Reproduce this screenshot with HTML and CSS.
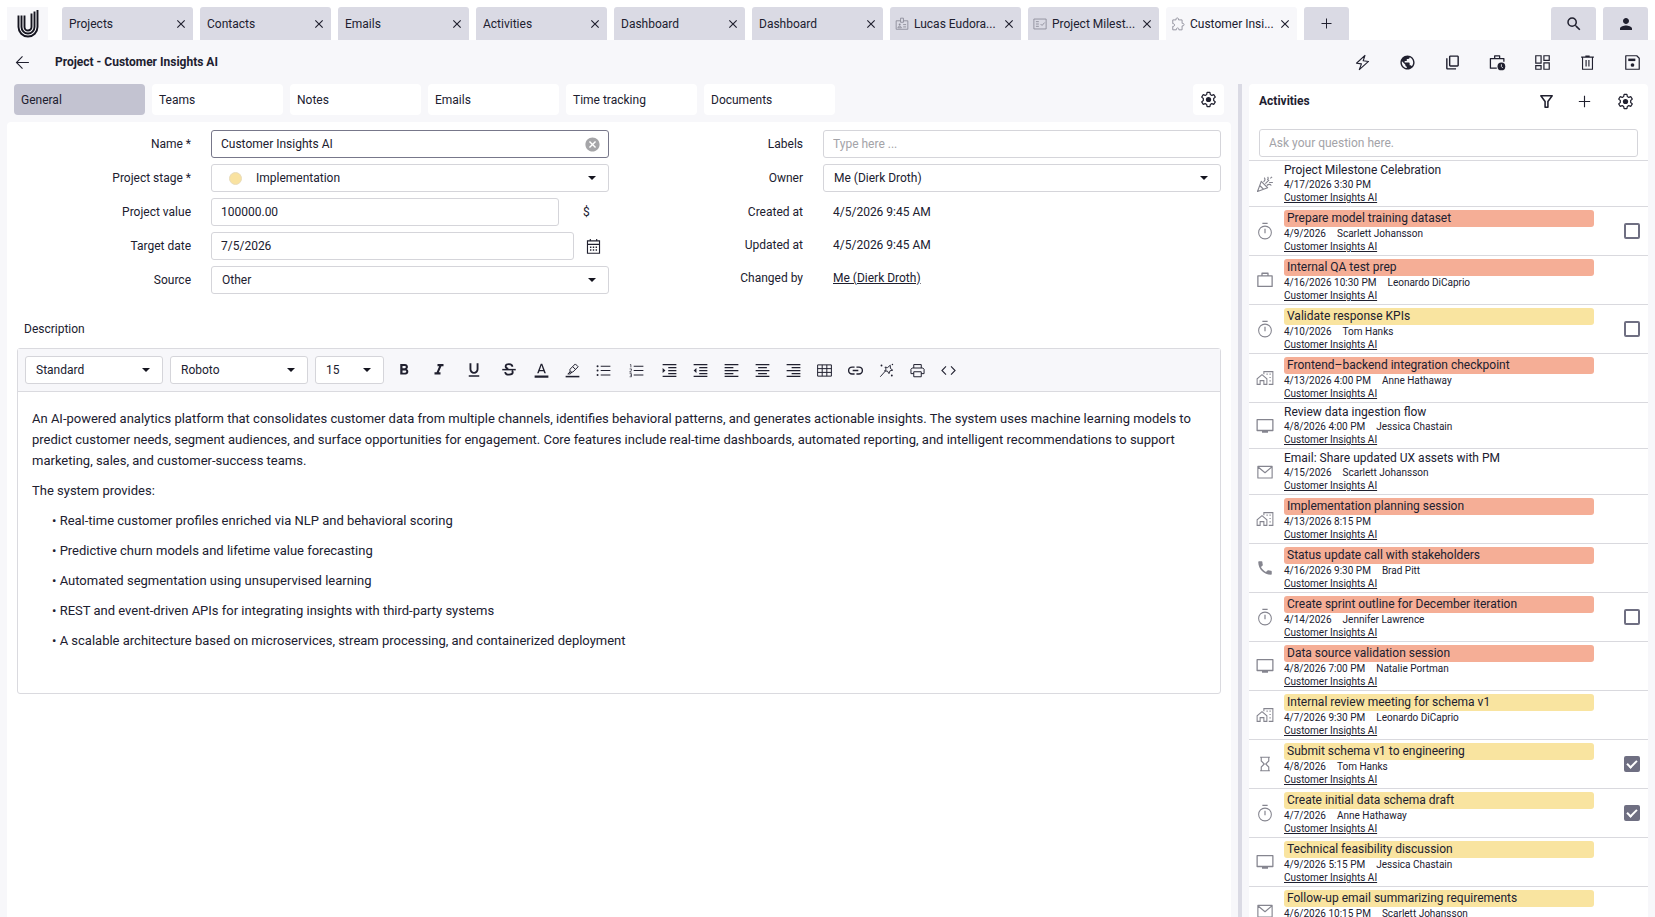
FILE: index.html
```html
<!DOCTYPE html>
<html lang="en">
<head>
    <meta charset="UTF-8" />
    <meta name="viewport" content="width=device-width, initial-scale=1.0" />
    <title>Project - Customer Insights AI</title>
    <link rel="stylesheet" href="styles.css">
</head>
<body>
    <!-- Icon sprite -->
    <svg class="sprite" aria-hidden="true">
        <symbol id="i-close" viewBox="0 0 24 24"><path d="M19 6.41 17.59 5 12 10.59 6.41 5 5 6.41 10.59 12 5 17.59 6.41 19 12 13.41 17.59 19 19 17.59 13.41 12z"/></symbol>
        <symbol id="i-plus" viewBox="0 0 24 24"><path d="M20 12.8h-7.2V20h-1.6v-7.2H4v-1.6h7.2V4h1.6v7.2H20z"/></symbol>
        <symbol id="i-search" viewBox="0 0 24 24"><path d="M15.5 14h-.79l-.28-.27A6.47 6.47 0 0 0 16 9.5 6.5 6.5 0 1 0 9.5 16c1.61 0 3.09-.59 4.23-1.57l.27.28v.79l5 4.99L20.49 19zm-6 0C7.01 14 5 11.99 5 9.5S7.01 5 9.5 5 14 7.01 14 9.5 11.99 14 9.5 14"/></symbol>
        <symbol id="i-person" viewBox="0 0 24 24"><path d="M12 12c2.21 0 4-1.79 4-4s-1.79-4-4-4-4 1.79-4 4 1.79 4 4 4m0 2c-2.67 0-8 1.34-8 4v2h16v-2c0-2.66-5.33-4-8-4"/></symbol>
        <symbol id="i-back" viewBox="0 0 24 24"><path fill="none" stroke="currentColor" stroke-width="1.5" d="M21 12H4M12 3.500 3.500 12l8.500 8.500"/></symbol>
        <symbol id="i-badge" viewBox="0 0 24 24"><path fill="none" stroke="currentColor" stroke-width="1.5" d="M9.500 6.500H2V21h20V6.500h-7.500M9.500 2h5v7h-5zM14 13h5M14 17h5M5 18.500c0-3.500 6-3.500 6 0z"/><circle cx="8" cy="13" r="1.700"/></symbol>
        <symbol id="i-fact" viewBox="0 0 24 24"><path fill="none" stroke="currentColor" stroke-width="1.500" d="M1.500 3.500h21v17h-21zM5 8h5M5 12h5M5 16h5M13 12l2.500 2.500 4.500-5"/></symbol>
        <symbol id="i-puzzle" viewBox="0 0 24 24"><path fill="none" stroke="currentColor" stroke-width="1.500" stroke-linejoin="round" d="M3 5h5.700c-1.500-4.500 5.600-4.500 4.200 0H19v6c4.500-1.200 4.500 5.200 0 4.200V22h-5.600c1-4.300-5.200-4.300-4.200 0H3v-6c4.300 1 4.300-5.500 0-4.500z"/></symbol>
        <symbol id="i-bolt" viewBox="0 0 24 24"><path fill="none" stroke="currentColor" stroke-width="1.600" stroke-linejoin="round" d="M15.500 2 3.500 13l7 1L7.500 22l13-11.500-7.500-1z"/></symbol>
        <symbol id="i-globe" viewBox="0 0 24 24"><path d="M12 2C6.480 2 2 6.480 2 12s4.480 10 10 10 10-4.480 10-10S17.520 2 12 2m-1 17.930c-3.950-.49-7-3.850-7-7.930 0-.62.080-1.210.210-1.790L9 15v1c0 1.100.9 2 2 2zm6.900-2.540c-.26-.81-1-1.390-1.900-1.390h-1v-3c0-.55-.45-1-1-1H8v-2h2c.55 0 1-.45 1-1V7h2c1.100 0 2-.9 2-2v-.41c2.930 1.190 5 4.060 5 7.410 0 2.080-.8 3.970-2.100 5.390"/></symbol>
        <symbol id="i-copy" viewBox="0 0 24 24"><path d="M19 2H9c-1.100 0-2 .9-2 2v12c0 1.100.9 2 2 2h10c1.100 0 2-.9 2-2V4c0-1.100-.9-2-2-2m0 14H9V4h10zM3 6v14c0 1.100.9 2 2 2h12v-2H5V6z"/></symbol>
        <symbol id="i-casetime" viewBox="0 0 24 24"><path fill="none" stroke="currentColor" stroke-width="1.800" stroke-linejoin="round" d="M11 20H2V6.500h19V11M8 6.500v-4h7v4"/><circle cx="17.500" cy="17.500" r="5.500"/><path stroke="#f7f7fa" stroke-width="1.200" fill="none" d="M17.500 14.500v3.200l2 2"/></symbol>
        <symbol id="i-dash" viewBox="0 0 24 24"><path fill="none" stroke="currentColor" stroke-width="1.700" d="M2.500 2.500H10V13H2.500zM14 2.500h7.500V9H14zM14 12.500h7.500v9H14zM2.500 16.500H10v5H2.500z"/></symbol>
        <symbol id="i-trash" viewBox="0 0 24 24"><path fill="none" stroke="currentColor" stroke-width="1.600" d="M5 5v16.500h14V5M3 4.500h18M9 3h6M10 8.500v9M14 8.500v9"/></symbol>
        <symbol id="i-save" viewBox="0 0 24 24"><path fill="none" stroke="currentColor" stroke-width="1.700" stroke-linejoin="round" d="M2.500 2.500H18L21.500 6v15.500h-19z"/><path d="M6 6.500h10V10H6z"/><circle cx="12" cy="15.500" r="2.600"/></symbol>
        <symbol id="i-gear" viewBox="0 0 24 24"><path fill="none" stroke="currentColor" stroke-width="1.700" stroke-linejoin="round" d="M10 2h4l.6 3 2 1.200 3-1 2 3.500-2.300 2v2.600l2.300 2-2 3.500-3-1-2 1.200-.6 3h-4l-.6-3-2-1.200-3 1-2-3.500 2.300-2v-2.600l-2.300-2 2-3.500 3 1 2-1.200z"/><circle cx="12" cy="12" r="3.700"/></symbol>
        <symbol id="i-filter" viewBox="0 0 24 24"><path fill="none" stroke="currentColor" stroke-width="2.200" stroke-linejoin="round" d="M4 4h16l-6 8v8h-4v-8z"/></symbol>
        <symbol id="i-clear" viewBox="0 0 24 24"><path d="M12 2C6.470 2 2 6.470 2 12s4.470 10 10 10 10-4.470 10-10S17.530 2 12 2m5 13.590L15.590 17 12 13.410 8.410 17 7 15.590 10.590 12 7 8.410 8.410 7 12 10.590 15.590 7 17 8.410 13.410 12z"/></symbol>
        <symbol id="i-calendar" viewBox="0 0 24 24"><path fill="none" stroke="currentColor" stroke-width="1.600" d="M3.500 4h17v17.500h-17zM3.500 9h17M7.500 1.500V5M16.500 1.500V5"/><path d="M7 12h2v2H7zM11 12h2v2h-2zM15 12h2v2h-2zM7 16h2v2H7zM11 16h2v2h-2zM15 16h2v2h-2z"/></symbol>
        <symbol id="i-bold" viewBox="0 0 24 24"><path d="M15.600 10.790c.97-.67 1.650-1.770 1.650-2.790 0-2.260-1.750-4-4-4H7v14h7.040c2.090 0 3.710-1.700 3.710-3.790 0-1.520-.86-2.820-2.150-3.420M10 6.500h3c.83 0 1.500.67 1.500 1.500s-.67 1.500-1.500 1.500h-3zm3.500 9H10v-3h3.500c.83 0 1.500.67 1.500 1.500s-.67 1.500-1.500 1.500"/></symbol>
        <symbol id="i-italic" viewBox="0 0 24 24"><path d="M10 4v3h2.210l-3.420 8H6v3h8v-3h-2.210l3.420-8H18V4z"/></symbol>
        <symbol id="i-underline" viewBox="0 0 24 24"><path d="M12 17c3.310 0 6-2.690 6-6V3h-2.500v8c0 1.930-1.570 3.500-3.500 3.500S8.500 12.930 8.500 11V3H6v8c0 3.310 2.690 6 6 6m-7 2v2h14v-2z"/></symbol>
        <symbol id="i-strike" viewBox="0 0 24 24"><path fill="none" stroke="currentColor" stroke-width="2.400" d="M16.500 7.500c0-4.500-9-4.500-9-.5 0 2 1.500 3 3.500 3.600M7 14.500c0 5 10 4.500 10 .5 0-1-.4-1.800-1-2.500"/><path d="M3 10.500h18v2H3z"/></symbol>
        <symbol id="i-color" viewBox="0 0 24 24"><path d="M1 20h22v3.500H1zM10.800 1 5 16.500h2.500l1.200-3.500h6.600l1.200 3.500H19L13.200 1zm-1.380 10L12 3.670 14.580 11z"/></symbol>
        <symbol id="i-pen" viewBox="0 0 24 24"><path d="M1 20.500h22V23H1z"/><path fill="none" stroke="currentColor" stroke-width="1.600" stroke-linejoin="round" d="M8 10 16.500 1.500l4.500 4.500-8.500 8.500H8zM8 14.500 4.500 17.500h4l2.500-3M12.500 6l4.300 4.300"/></symbol>
        <symbol id="i-ul" viewBox="0 0 24 24"><path d="M7.500 4.200H23v1.600H7.500zM7.500 11.200H23v1.600H7.500zM7.500 18.200H23v1.600H7.500z"/><circle cx="2.500" cy="5" r="1.600"/><circle cx="2.500" cy="12" r="1.600"/><circle cx="2.500" cy="19" r="1.600"/></symbol>
        <symbol id="i-ol" viewBox="0 0 24 24"><path d="M7.500 4.200H23v1.600H7.500zM7.500 11.200H23v1.600H7.500zM7.500 18.200H23v1.600H7.500z"/><path fill="none" stroke="currentColor" stroke-width="1.100" d="M1.500 2.500H3V7M1 9.500h3v2L1 14.500h3.200M1 17h3v5H1M2 19.500h2"/></symbol>
        <symbol id="i-indent" viewBox="0 0 24 24"><path d="M1 1.500h22v2H1zM10 6.200h13v2H10zM10 11h13v2H10zM10 15.800h13v2H10zM1 20.500h22v2H1zM1 8v8l4.500-4z"/></symbol>
        <symbol id="i-outdent" viewBox="0 0 24 24"><path d="M1 1.500h22v2H1zM10 6.200h13v2H10zM10 11h13v2H10zM10 15.800h13v2H10zM1 20.500h22v2H1zM5.500 8v8L1 12z"/></symbol>
        <symbol id="i-left" viewBox="0 0 24 24"><path d="M1 1.500h22v2H1zM1 6.200h14v2H1zM1 11h22v2H1zM1 15.800h14v2H1zM1 20.500h22v2H1z"/></symbol>
        <symbol id="i-center" viewBox="0 0 24 24"><path d="M1 1.500h22v2H1zM5 6.200h14v2H5zM1 11h22v2H1zM5 15.800h14v2H5zM1 20.500h22v2H1z"/></symbol>
        <symbol id="i-right" viewBox="0 0 24 24"><path d="M1 1.500h22v2H1zM9 6.200h14v2H9zM1 11h22v2H1zM9 15.800h14v2H9zM1 20.500h22v2H1z"/></symbol>
        <symbol id="i-table" viewBox="0 0 24 24"><path fill="none" stroke="currentColor" stroke-width="1.600" d="M1 3h22v18H1zM1 9h22M1 15h22M8.300 3v18M15.700 3v18"/></symbol>
        <symbol id="i-link" viewBox="0 0 24 24"><path fill="none" stroke="currentColor" stroke-width="2.200" d="M10.500 6.500H6.500a5.500 5.500 0 0 0 0 11h4M13.500 6.500h4a5.500 5.500 0 0 1 0 11h-4M7.500 12h9"/></symbol>
        <symbol id="i-wand" viewBox="0 0 24 24"><path fill="none" stroke="currentColor" stroke-width="1.500" stroke-linejoin="round" d="M2 22 11 12M9.500 6.500l4.200.8L18 3.500l.3 5.200 3.700 2.800-4.500 1-1.500 4.500-2.500-4-4.500-.3 2.500-3z"/><circle cx="4" cy="4" r="1.500"/><circle cx="20.500" cy="20" r="1.500"/><circle cx="21.500" cy="2.500" r="1.200"/></symbol>
        <symbol id="i-print" viewBox="0 0 24 24"><path fill="none" stroke="currentColor" stroke-width="1.600" stroke-linejoin="round" d="M6 17H1.500v-7l2-2h17l2 2v7H18M6 8V2.500h12V8M6 14h12v8H6z"/></symbol>
        <symbol id="i-code" viewBox="0 0 24 24"><path fill="none" stroke="currentColor" stroke-width="1.700" d="M8 5.500 1.500 12 8 18.500M16 5.500l6.500 6.500-6.500 6.500"/></symbol>
        <symbol id="i-party" viewBox="0 0 24 24"><path fill="none" stroke="currentColor" stroke-width="1.500" stroke-linejoin="round" d="M2 22 7 8.500l8.500 8.500zM5 14l5 5M12.500 11.500l5-5M14.500 14c2-2 4.500-2 6 0M10 9c2-1.500 2.500-3.500 1-5.500M15 6.500c1.500-1 1.500-2.500.5-4M17.500 10h5M19 4.500l2.500-2"/></symbol>
        <symbol id="i-timer" viewBox="0 0 24 24"><circle cx="12" cy="14" r="8.500" fill="none" stroke="currentColor" stroke-width="1.400"/><path d="M8.500 1h7v1.600h-7zM11.200 9h1.600v6h-1.600z"/></symbol>
        <symbol id="i-case" viewBox="0 0 24 24"><path fill="none" stroke="currentColor" stroke-width="1.700" stroke-linejoin="round" d="M2.500 6.500h19v14h-19zM8 6.500V3h8v3.500"/></symbol>
        <symbol id="i-home" viewBox="0 0 24 24"><path fill="none" stroke="currentColor" stroke-width="1.400" d="M1.500 20.500v-7.500L8 7.500l6.500 5.500v7.500h-4v-5h-5v5zM10.500 7V3.500h12v17H17"/><path d="M14 6h1.600v1.600H14zM18 6h1.600v1.600H18zM18 10.500h1.600v1.600H18zM18 15h1.600v1.600H18z"/></symbol>
        <symbol id="i-monitor" viewBox="0 0 24 24"><path fill="none" stroke="currentColor" stroke-width="1.700" stroke-linejoin="round" d="M1.500 3.500h21v14.500h-21z"/><path d="M8 18.500h8V21H8z"/></symbol>
        <symbol id="i-mail" viewBox="0 0 24 24"><path fill="none" stroke="currentColor" stroke-width="1.500" stroke-linejoin="round" d="M2.500 4.500h19v15.500h-19zM2.500 5 12 13l9.500-8"/></symbol>
        <symbol id="i-phone" viewBox="0 0 24 24"><path d="M6.620 10.790c1.440 2.830 3.760 5.140 6.590 6.590l2.200-2.200c.27-.27.67-.36 1.020-.24 1.120.37 2.330.57 3.570.57.550 0 1 .45 1 1V20c0 .55-.45 1-1 1-9.390 0-17-7.610-17-17 0-.55.45-1 1-1h3.500c.55 0 1 .45 1 1 0 1.250.2 2.450.57 3.570.11.35.03.74-.25 1.020z"/></symbol>
        <symbol id="i-glass" viewBox="0 0 24 24"><path fill="none" stroke="currentColor" stroke-width="1.500" d="M5.500 3h13M5.500 21h13M7 3v5l4 4-4 4v5M17 3v5l-4 4 4 4v5"/></symbol>
    </svg>

    <header class="tabbar">
        <a class="logo" href="#" aria-label="Home">
            <svg viewBox="0 0 22 28"><g fill="none" stroke="#14141f" stroke-width="1.900"><path d="M1.500 5.500V17a9.500 9.500 0 0 0 19 0V0"/><path d="M4.500 5.500V17a6.500 6.500 0 0 0 13 0V1.500"/><path d="M7.500 5.500V17a3.500 3.500 0 0 0 7 0V3.500"/></g></svg>
        </a>
        <nav class="tabs">
            <div class="tab"><a href="#">Projects</a><button aria-label="Close"><svg class="icon"><use href="#i-close"/></svg></button></div>
            <div class="tab"><a href="#">Contacts</a><button aria-label="Close"><svg class="icon"><use href="#i-close"/></svg></button></div>
            <div class="tab"><a href="#">Emails</a><button aria-label="Close"><svg class="icon"><use href="#i-close"/></svg></button></div>
            <div class="tab"><a href="#">Activities</a><button aria-label="Close"><svg class="icon"><use href="#i-close"/></svg></button></div>
            <div class="tab"><a href="#">Dashboard</a><button aria-label="Close"><svg class="icon"><use href="#i-close"/></svg></button></div>
            <div class="tab"><a href="#">Dashboard</a><button aria-label="Close"><svg class="icon"><use href="#i-close"/></svg></button></div>
            <div class="tab"><svg class="icon type"><use href="#i-badge"/></svg><a href="#">Lucas Eudora...</a><button aria-label="Close"><svg class="icon"><use href="#i-close"/></svg></button></div>
            <div class="tab"><svg class="icon type"><use href="#i-fact"/></svg><a href="#">Project Milest...</a><button aria-label="Close"><svg class="icon"><use href="#i-close"/></svg></button></div>
            <div class="tab active"><svg class="icon type"><use href="#i-puzzle"/></svg><a href="#">Customer Insi...</a><button aria-label="Close"><svg class="icon"><use href="#i-close"/></svg></button></div>
            <button class="bar-btn" aria-label="New tab"><svg class="icon"><use href="#i-plus"/></svg></button>
        </nav>
        <div class="bar-right">
            <button class="bar-btn" aria-label="Search"><svg class="icon big"><use href="#i-search"/></svg></button>
            <button class="bar-btn" aria-label="Account"><svg class="icon big"><use href="#i-person"/></svg></button>
        </div>
    </header>

    <div class="titlebar">
        <button class="icon-btn" aria-label="Back"><svg class="icon"><use href="#i-back"/></svg></button>
        <h1>Project - Customer Insights AI</h1>
        <div class="actions">
            <button aria-label="Quick action"><svg class="icon"><use href="#i-bolt"/></svg></button>
            <button aria-label="Web"><svg class="icon"><use href="#i-globe"/></svg></button>
            <button aria-label="Copy"><svg class="icon"><use href="#i-copy"/></svg></button>
            <button aria-label="Schedule"><svg class="icon"><use href="#i-casetime"/></svg></button>
            <button aria-label="Layout"><svg class="icon"><use href="#i-dash"/></svg></button>
            <button aria-label="Delete"><svg class="icon"><use href="#i-trash"/></svg></button>
            <button aria-label="Save"><svg class="icon"><use href="#i-save"/></svg></button>
        </div>
    </div>

    <div class="workspace">
        <main class="main">
            <div class="subtabs">
                <button class="subtab selected">General</button>
                <button class="subtab">Teams</button>
                <button class="subtab">Notes</button>
                <button class="subtab">Emails</button>
                <button class="subtab">Time tracking</button>
                <button class="subtab">Documents</button>
                <button class="subtab-gear" aria-label="Settings"><svg class="icon"><use href="#i-gear"/></svg></button>
            </div>

            <section class="card">
                <form class="form">
                    <div class="col">
                        <div class="field">
                            <label for="name">Name *</label>
                            <div class="control boxed focused">
                                <input id="name" type="text" value="Customer Insights AI">
                                <button type="button" class="clear" aria-label="Clear"><svg class="icon"><use href="#i-clear"/></svg></button>
                            </div>
                        </div>
                        <div class="field">
                            <label for="stage">Project stage *</label>
                            <div class="control boxed select stage">
                                <span class="dot"></span>
                                <select id="stage"><option>Implementation</option></select>
                            </div>
                        </div>
                        <div class="field">
                            <label for="value">Project value</label>
                            <div class="control">
                                <input id="value" class="boxed" type="text" value="100000.00">
                                <span class="currency">$</span>
                            </div>
                        </div>
                        <div class="field">
                            <label for="target">Target date</label>
                            <div class="control">
                                <input id="target" class="boxed" type="text" value="7/5/2026">
                                <button type="button" class="pick" aria-label="Pick date"><svg class="icon"><use href="#i-calendar"/></svg></button>
                            </div>
                        </div>
                        <div class="field">
                            <label for="source">Source</label>
                            <div class="control boxed select">
                                <select id="source"><option>Other</option></select>
                            </div>
                        </div>
                    </div>
                    <div class="col">
                        <div class="field">
                            <label for="labels">Labels</label>
                            <div class="control boxed"><input id="labels" type="text" placeholder="Type here ..."></div>
                        </div>
                        <div class="field">
                            <label for="owner">Owner</label>
                            <div class="control boxed select">
                                <select id="owner"><option>Me (Dierk Droth)</option></select>
                            </div>
                        </div>
                        <div class="field info"><span class="name">Created at</span><span class="control">4/5/2026 9:45 AM</span></div>
                        <div class="field info"><span class="name">Updated at</span><span class="control">4/5/2026 9:45 AM</span></div>
                        <div class="field info"><span class="name">Changed by</span><span class="control"><a href="#">Me (Dierk Droth)</a></span></div>
                    </div>
                </form>

                <h2 class="section-label">Description</h2>
                <div class="editor">
                    <div class="toolbar">
                        <div class="boxed select format"><select aria-label="Paragraph style"><option>Standard</option></select></div>
                        <div class="boxed select format"><select aria-label="Font"><option>Roboto</option></select></div>
                        <div class="boxed select size"><select aria-label="Font size"><option>15</option></select></div>
                        <div class="tools">
                            <button class="wide glyph" aria-label="Bold"><svg class="icon"><use href="#i-bold"/></svg></button>
                            <button class="wide glyph" aria-label="Italic"><svg class="icon"><use href="#i-italic"/></svg></button>
                            <button class="wide glyph" aria-label="Underline"><svg class="icon"><use href="#i-underline"/></svg></button>
                            <button class="wide glyph" aria-label="Strikethrough"><svg class="icon"><use href="#i-strike"/></svg></button>
                            <button aria-label="Text color"><svg class="icon"><use href="#i-color"/></svg></button>
                            <button aria-label="Highlight"><svg class="icon"><use href="#i-pen"/></svg></button>
                            <button aria-label="Bullet list"><svg class="icon"><use href="#i-ul"/></svg></button>
                            <button class="wide" aria-label="Numbered list"><svg class="icon"><use href="#i-ol"/></svg></button>
                            <button aria-label="Indent"><svg class="icon"><use href="#i-indent"/></svg></button>
                            <button aria-label="Outdent"><svg class="icon"><use href="#i-outdent"/></svg></button>
                            <button aria-label="Align left"><svg class="icon"><use href="#i-left"/></svg></button>
                            <button aria-label="Align center"><svg class="icon"><use href="#i-center"/></svg></button>
                            <button aria-label="Align right"><svg class="icon"><use href="#i-right"/></svg></button>
                            <button aria-label="Table"><svg class="icon"><use href="#i-table"/></svg></button>
                            <button aria-label="Link"><svg class="icon"><use href="#i-link"/></svg></button>
                            <button aria-label="Assistant"><svg class="icon"><use href="#i-wand"/></svg></button>
                            <button aria-label="Print"><svg class="icon"><use href="#i-print"/></svg></button>
                            <button aria-label="Source code"><svg class="icon"><use href="#i-code"/></svg></button>
                        </div>
                    </div>
                    <div class="text">
                        <p>An AI-powered analytics platform that consolidates customer data from multiple channels, identifies behavioral patterns, and generates actionable insights. The system uses machine learning models to predict customer needs, segment audiences, and surface opportunities for engagement. Core features include real-time dashboards, automated reporting, and intelligent recommendations to support marketing, sales, and customer-success teams.</p>
                        <p>The system provides:</p>
                        <ul>
                            <li>Real-time customer profiles enriched via NLP and behavioral scoring</li>
                            <li>Predictive churn models and lifetime value forecasting</li>
                            <li>Automated segmentation using unsupervised learning</li>
                            <li>REST and event-driven APIs for integrating insights with third-party systems</li>
                            <li>A scalable architecture based on microservices, stream processing, and containerized deployment</li>
                        </ul>
                    </div>
                </div>
            </section>
        </main>

        <div class="splitter"></div>

        <aside class="side">
            <div class="side-head">
                <h2>Activities</h2>
                <button aria-label="Filter"><svg class="icon"><use href="#i-filter"/></svg></button>
                <button aria-label="Add activity"><svg class="icon"><use href="#i-plus"/></svg></button>
                <button class="settings" aria-label="Settings"><svg class="icon"><use href="#i-gear"/></svg></button>
            </div>
            <div class="ask"><input class="boxed" type="text" aria-label="Question" placeholder="Ask your question here."></div>
            <ul class="activities">
                <li><svg class="icon"><use href="#i-party"/></svg><div class="entry"><h3>Project Milestone Celebration</h3><p><span>4/17/2026 3:30 PM</span></p><a href="#">Customer Insights AI</a></div></li>
                <li><svg class="icon"><use href="#i-timer"/></svg><div class="entry"><h3 class="red">Prepare model training dataset</h3><p><span>4/9/2026</span><span>Scarlett Johansson</span></p><a href="#">Customer Insights AI</a></div><input type="checkbox" aria-label="Prepare model training dataset"></li>
                <li><svg class="icon"><use href="#i-case"/></svg><div class="entry"><h3 class="red">Internal QA test prep</h3><p><span>4/16/2026 10:30 PM</span><span>Leonardo DiCaprio</span></p><a href="#">Customer Insights AI</a></div></li>
                <li><svg class="icon"><use href="#i-timer"/></svg><div class="entry"><h3 class="yellow">Validate response KPIs</h3><p><span>4/10/2026</span><span>Tom Hanks</span></p><a href="#">Customer Insights AI</a></div><input type="checkbox" aria-label="Validate response KPIs"></li>
                <li><svg class="icon"><use href="#i-home"/></svg><div class="entry"><h3 class="red">Frontend–backend integration checkpoint</h3><p><span>4/13/2026 4:00 PM</span><span>Anne Hathaway</span></p><a href="#">Customer Insights AI</a></div></li>
                <li><svg class="icon"><use href="#i-monitor"/></svg><div class="entry"><h3>Review data ingestion flow</h3><p><span>4/8/2026 4:00 PM</span><span>Jessica Chastain</span></p><a href="#">Customer Insights AI</a></div></li>
                <li><svg class="icon"><use href="#i-mail"/></svg><div class="entry"><h3>Email: Share updated UX assets with PM</h3><p><span>4/15/2026</span><span>Scarlett Johansson</span></p><a href="#">Customer Insights AI</a></div></li>
                <li><svg class="icon"><use href="#i-home"/></svg><div class="entry"><h3 class="red">Implementation planning session</h3><p><span>4/13/2026 8:15 PM</span></p><a href="#">Customer Insights AI</a></div></li>
                <li><svg class="icon"><use href="#i-phone"/></svg><div class="entry"><h3 class="red">Status update call with stakeholders</h3><p><span>4/16/2026 9:30 PM</span><span>Brad Pitt</span></p><a href="#">Customer Insights AI</a></div></li>
                <li><svg class="icon"><use href="#i-timer"/></svg><div class="entry"><h3 class="red">Create sprint outline for December iteration</h3><p><span>4/14/2026</span><span>Jennifer Lawrence</span></p><a href="#">Customer Insights AI</a></div><input type="checkbox" aria-label="Create sprint outline for December iteration"></li>
                <li><svg class="icon"><use href="#i-monitor"/></svg><div class="entry"><h3 class="red">Data source validation session</h3><p><span>4/8/2026 7:00 PM</span><span>Natalie Portman</span></p><a href="#">Customer Insights AI</a></div></li>
                <li><svg class="icon"><use href="#i-home"/></svg><div class="entry"><h3 class="yellow">Internal review meeting for schema v1</h3><p><span>4/7/2026 9:30 PM</span><span>Leonardo DiCaprio</span></p><a href="#">Customer Insights AI</a></div></li>
                <li><svg class="icon"><use href="#i-glass"/></svg><div class="entry"><h3 class="yellow">Submit schema v1 to engineering</h3><p><span>4/8/2026</span><span>Tom Hanks</span></p><a href="#">Customer Insights AI</a></div><input type="checkbox" checked aria-label="Submit schema v1 to engineering"></li>
                <li><svg class="icon"><use href="#i-timer"/></svg><div class="entry"><h3 class="yellow">Create initial data schema draft</h3><p><span>4/7/2026</span><span>Anne Hathaway</span></p><a href="#">Customer Insights AI</a></div><input type="checkbox" checked aria-label="Create initial data schema draft"></li>
                <li><svg class="icon"><use href="#i-monitor"/></svg><div class="entry"><h3 class="yellow">Technical feasibility discussion</h3><p><span>4/9/2026 5:15 PM</span><span>Jessica Chastain</span></p><a href="#">Customer Insights AI</a></div></li>
                <li><svg class="icon"><use href="#i-mail"/></svg><div class="entry"><h3 class="yellow">Follow-up email summarizing requirements</h3><p><span>4/6/2026 10:15 PM</span><span>Scarlett Johansson</span></p><a href="#">Customer Insights AI</a></div></li>
            </ul>
        </aside>
    </div>
</body>
</html>
```
FILE: styles.css
```css
* {
    box-sizing: border-box;
}
html, body {
    margin: 0;
    padding: 0;
    height: 100%;
}
body {
    display: flex;
    flex-direction: column;
    overflow: hidden;
    font-family: Roboto, "Liberation Sans", sans-serif;
    font-size: 12px;
    color: #20202f;
    background: #f7f7fa;
}
h1, h2, h3, p, ul {
    margin: 0;
    padding: 0;
    font-size: 12px;
    font-weight: normal;
}
ul {
    list-style: none;
}
a {
    color: inherit;
}
button, input, select {
    font: inherit;
    color: inherit;
    border: none;
    background: none;
    padding: 0;
    margin: 0;
    min-width: 0;
    outline: none;
}
button {
    display: flex;
    align-items: center;
    justify-content: center;
    cursor: pointer;
}
.sprite {
    display: none;
}
.icon {
    display: block;
    flex: none;
    width: 17px;
    height: 17px;
    fill: currentColor;
}

/* Top tab bar */
.tabbar {
    display: flex;
    align-items: flex-end;
    height: 40px;
    padding: 0 7px;
    background: #fff;
}
.logo {
    display: flex;
    align-items: center;
    justify-content: center;
    width: 41px;
    height: 33px;
    margin-right: 14px;
    background: #f7f7fa;
}
.logo svg {
    width: 22px;
    height: 28px;
}
.tabs {
    display: flex;
    flex: 1;
    gap: 7px;
}
.tab {
    display: flex;
    align-items: center;
    width: 131px;
    height: 33px;
    padding: 0 5px 0 7px;
    border-radius: 3px 3px 0 0;
    background: #dadae4;
}
.tab a {
    flex: 1;
    overflow: hidden;
    white-space: nowrap;
    text-decoration: none;
}
.tab .icon {
    width: 14px;
    height: 14px;
}
.tab .type {
    margin: 0 5px 0 -2px;
    color: #8c8c98;
}
.tab.active {
    background: #f7f7fa;
}
.bar-btn {
    width: 45px;
    height: 33px;
    border-radius: 3px 3px 0 0;
    background: #dadae4;
}
.bar-btn .icon {
    width: 15px;
    height: 15px;
}
.bar-btn .icon.big {
    width: 18px;
    height: 18px;
}
.bar-right {
    display: flex;
    gap: 7px;
}

/* Title row */
.titlebar {
    display: flex;
    align-items: center;
    height: 44px;
    padding: 0 0 0 14px;
}
.titlebar h1 {
    flex: 1;
    margin-left: 24px;
    font-weight: bold;
}
.actions {
    display: flex;
}
.actions button {
    width: 45px;
    height: 28px;
}

/* Main area */
.workspace {
    display: flex;
    flex: 1;
    min-height: 0;
    padding: 0 7px;
}
.main {
    display: flex;
    flex: 1;
    flex-direction: column;
    min-width: 0;
}
.subtabs {
    display: flex;
    gap: 7px;
    padding: 0 7px;
    margin-bottom: 7px;
}
.subtab {
    justify-content: flex-start;
    width: 131px;
    height: 31px;
    padding: 0 7px;
    border-radius: 4px;
    background: #fff;
}
.subtab.selected {
    background: #c3c3d1;
}
.subtab-gear {
    width: 31px;
    height: 31px;
    margin-left: auto;
    border-radius: 4px;
    background: #fff;
}
.card {
    flex: 1;
    padding: 8px 10px;
    border-radius: 4px 4px 0 0;
    background: #fff;
}
.splitter {
    width: 4px;
    margin: 0 7px;
    background: #dadae4;
}

/* Form */
.form {
    display: grid;
    grid-template-columns: 1fr 1fr;
    gap: 20px;
}
.col {
    display: flex;
    flex-direction: column;
    gap: 6px;
}
.field {
    display: grid;
    grid-template-columns: 174px 1fr;
    gap: 20px;
    align-items: center;
    height: 28px;
}
.field label, .field .name {
    text-align: right;
}
.field.info {
    height: 27px;
}
.field.info .control {
    padding-left: 10px;
}
.boxed {
    height: 28px;
    border: 1px solid #d5d5da;
    border-radius: 3px;
    background: #fff;
}
.boxed.focused {
    border-color: #77778a;
}
.control {
    display: flex;
    align-items: center;
}
.control input {
    flex: 1;
    height: 28px;
    padding: 0 9px;
}
.control.boxed input {
    height: 26px;
}
.clear {
    padding: 0 7px;
    color: #a5a5a8;
}
.select {
    position: relative;
    display: flex;
    align-items: center;
}
.select select {
    flex: 1;
    height: 26px;
    padding: 0 32px 0 10px;
    appearance: none;
}
.select::after {
    content: "";
    position: absolute;
    right: 12px;
    border: 4px solid transparent;
    border-top: 4px solid #14141f;
    border-bottom: 0;
    pointer-events: none;
}
.dot {
    width: 13px;
    height: 13px;
    margin-left: 17px;
    border-radius: 50%;
    background: #f9e2a0;
    border: 1px solid #e8dcbc;
}
.stage select {
    padding-left: 14px;
}
.currency {
    width: 50px;
    padding-left: 24px;
}
.pick {
    width: 35px;
    padding-left: 3px;
}
::placeholder {
    color: #a3a3a8;
    opacity: 1;
}

/* Description editor */
.section-label {
    margin: 28px 0 11px 7px;
    line-height: 15px;
}
.editor {
    border: 1px solid #dadadf;
    border-radius: 3px;
}
.toolbar {
    display: flex;
    gap: 7px;
    padding: 7px;
    border-bottom: 1px solid #dadadf;
    background: #f7f7fa;
}
.format {
    width: 138px;
}
.size {
    width: 69px;
}
.tools {
    display: flex;
    margin-left: -5px;
}
.tools button {
    width: 31px;
    height: 28px;
}
.tools button.wide {
    width: 35px;
}
.tools .icon {
    width: 15px;
    height: 15px;
}
.tools .glyph .icon {
    width: 18px;
    height: 18px;
}
.text {
    min-height: 301px;
    padding: 16px 14px;
    font-size: 13px;
    line-height: 21px;
}
.text p {
    margin-bottom: 9px;
    font-size: 13px;
}
.text li {
    margin-bottom: 9px;
    padding-left: 20px;
}
.text ul {
    font-size: 13px;
}
.text li::before {
    content: "• ";
}

/* Activities panel */
.side {
    width: 399px;
    overflow: hidden;
    border-radius: 4px 4px 0 0;
    background: #fff;
}
.side-head {
    display: flex;
    align-items: center;
    height: 34px;
    padding-left: 10px;
}
.side-head h2 {
    flex: 1;
    font-weight: bold;
}
.side-head button {
    width: 38px;
    height: 28px;
}
.side-head .settings {
    width: 45px;
}
.ask {
    padding: 11px 10px 3px;
}
.ask input {
    display: block;
    width: 100%;
    padding: 0 9px;
}
.activities {
    border-top: 1px solid #d9d9de;
}
.activities li {
    display: flex;
    align-items: center;
    padding: 0 8px 0 7px;
    border-bottom: 1px solid #d9d9de;
}
.activities .icon {
    width: 18px;
    height: 18px;
    margin-right: 10px;
    color: #85858f;
}
.entry {
    width: 310px;
    padding-bottom: 2px;
    font-size: 10px;
    line-height: 13px;
}
.entry h3 {
    padding-top: 1px;
    line-height: 16px;
}
.entry h3.red, .entry h3.yellow {
    margin-top: 3px;
    padding: 0 3px;
    border-radius: 3px;
    line-height: 17px;
}
.entry h3.red {
    background: #f5ae96;
}
.entry h3.yellow {
    background: #f9e4a0;
}
.entry p {
    display: flex;
    gap: 11px;
    font-size: 10px;
}
.entry a {
    display: block;
}
.activities input {
    width: 16px;
    height: 16px;
    margin-left: auto;
    border: 2px solid #6f6f82;
    border-radius: 2px;
    appearance: none;
}
.activities input:checked {
    background: #6f6f82;
}
.activities input:checked::before {
    content: "";
    display: block;
    width: 4px;
    height: 8px;
    margin: 0 auto;
    border: solid #fff;
    border-width: 0 2px 2px 0;
    transform: rotate(45deg);
}
```
